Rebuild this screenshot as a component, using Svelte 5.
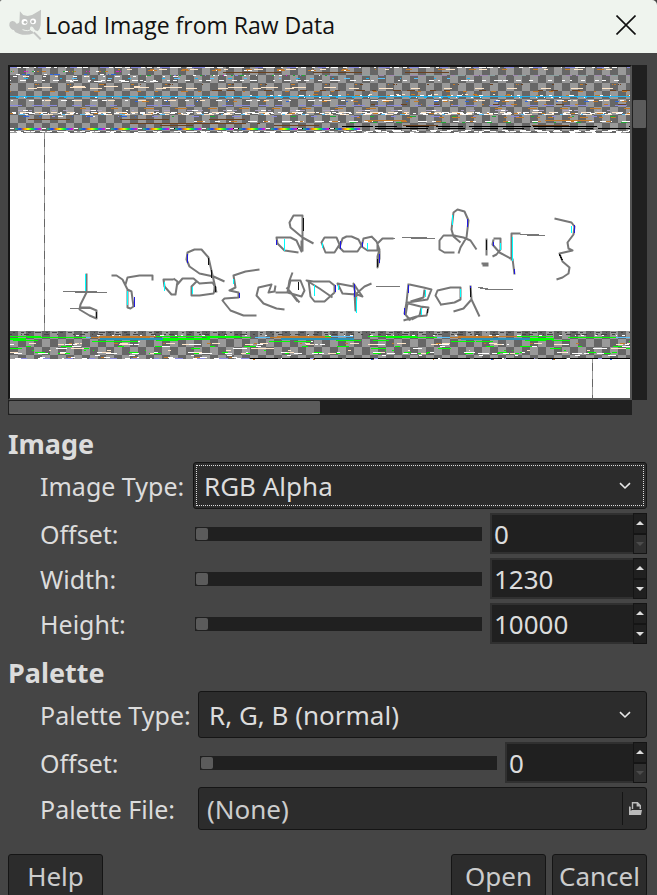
<script>
  let imageType = $state('RGB Alpha');
  let paletteType = $state('R, G, B (normal)');

  const imageFields = [
    { id: 'offset', label: 'Offset:', value: '0', atMin: true },
    { id: 'width', label: 'Width:', value: '1230', atMin: false },
    { id: 'height', label: 'Height:', value: '10000', atMin: false }
  ];
  const paletteFields = [{ id: 'palette-offset', label: 'Offset:', value: '0', atMin: true }];

  // Misaligned raw bytes show up as repeating scanline dashes.
  // [y, from, to, period, dashes per period, min length, max length, colours, thickness]
  const W = '#ffffff', K = '#000000', C = '#1fb4f0', O = '#c47a28', B = '#6b4220', T = '#ffe6c8';
  const L = '#8888dd', U = '#2f66dd', G = '#20a838', N = '#00ff00', M = '#e010d0', Y = '#5bc0f8', D = '#444444';
  const scanlines = [
    [0, 0, 620, 31, 4, 5, 12, [W, W, T, L]],
    [2, 90, 620, 32, 3, 3, 9, [O, T, U, W]],
    [3, 120, 350, 32, 3, 2, 8, [G, U, O, W]],
    [4, 0, 112, 31, 8, 2, 5, [G, M, W, O, W]],
    [5, 130, 480, 90, 1, 30, 60, [B]],
    [7, 0, 120, 28, 3, 3, 7, [W, U, W]],
    [8, 130, 320, 31, 7, 2, 5, [M, G, W, W, L]],
    [8, 320, 620, 31, 3, 5, 12, ['#8aa0a0', '#a088b0', '#88aa88']],
    [9, 0, 180, 30, 3, 3, 7, [W, W, T]],
    [11, 0, 460, 34, 2, 3, 8, [C, '#4488bb', Y]],
    [13, 0, 620, 33, 3, 3, 9, [W, T, W]],
    [14, 60, 150, 28, 2, 4, 10, [W]],
    [17, 0, 620, 32, 4, 1, 4, [B, O, B]],
    [19, 20, 130, 30, 1, 9, 16, [T]],
    [20, 0, 330, 32, 1, 12, 18, [W, T]],
    [21, 0, 620, 32, 1, 6, 14, [T, W]],
    [23, 180, 620, 36, 2, 7, 14, [O, B]],
    [24, 0, 620, 44, 2, 3, 7, [O, B]],
    [27, 300, 500, 32, 3, 2, 6, [O, T, W]],
    [28, 240, 620, 30, 3, 3, 7, [O, W, T]],
    [30, 0, 620, 8, 2, 1, 3, [W, C]],
    [33, 0, 620, 31, 3, 4, 10, [T, W, O]],
    [34, 120, 620, 30, 2, 4, 10, [O, U]],
    [37, 340, 620, 31, 2, 3, 8, [B, O]],
    [38, 0, 620, 38, 3, 6, 14, [L, L, '#555577']],
    [41, 20, 620, 32, 1, 10, 16, [O]],
    [43, 0, 620, 34, 3, 4, 10, [W, '#aaa0c0', T]],
    [45, 0, 620, 16, 3, 5, 10, [W, W, T]],
    [46, 0, 620, 28, 4, 4, 8, [T, W, O, W]],
    [47, 0, 620, 20, 4, 5, 10, [W, T, W, Y]],
    [49, 0, 130, 32, 5, 3, 8, [U, G, W, L]],
    [49, 130, 620, 40, 2, 4, 9, [W, G, L]],
    [50, 340, 620, 32, 2, 4, 9, [O, T]],
    [52, 0, 270, 90, 1, 40, 60, [B]],
    [53, 340, 620, 90, 1, 50, 80, [O]],
    [54, 170, 620, 34, 4, 5, 10, [W, O, T, W]],
    [55, 340, 620, 45, 2, 4, 10, [G, O]],
    [56, 120, 250, 130, 1, 100, 130, [B]],
    [58, 150, 620, 130, 1, 40, 70, [B]],
    [59, 320, 620, 32, 1, 29, 32, [K]],
    [61, 160, 620, 32, 1, 29, 32, [K]],
    [63, 340, 620, 18, 2, 4, 10, [W, T]],
    [64, 0, 620, 16, 2, 4, 8, [W, W]],
    [65, 0, 620, 23, 1, 3, 7, [W]],
    [265, 0, 620, 16, 2, 3, 6, [D]],
    [267, 0, 620, 18, 2, 3, 7, [D]],
    [268, 60, 620, 21, 4, 1, 4, [W, D, W]],
    [269, 0, 620, 180, 5, 40, 65, [O, N, Y, O, B]],
    [270, 0, 620, 180, 4, 30, 60, [O, Y, N]],
    [271, 0, 620, 180, 4, 25, 50, [Y, N, '#2a91b8'], 2],
    [273, 0, 620, 180, 3, 20, 35, [N, O, N]],
    [274, 0, 620, 180, 3, 15, 30, [N, W, N]],
    [276, 0, 620, 46, 3, 4, 9, [W, T, O]],
    [277, 0, 620, 62, 3, 5, 10, [W, W, T]],
    [279, 0, 620, 92, 3, 6, 16, [N, T, W]],
    [281, 0, 620, 180, 4, 10, 30, [N, N, T, W]],
    [283, 0, 620, 60, 3, 2, 5, [W, N, T]],
    [285, 0, 620, 92, 6, 5, 14, [W, N, T, W]],
    [286, 0, 620, 90, 6, 4, 11, [N, W, M, T, W]],
    [288, 0, 620, 93, 2, 5, 12, [N, W]],
    [290, 60, 620, 96, 2, 3, 8, [W, T]],
    [292, 30, 250, 32, 2, 6, 10, [O, W]],
    [293, 0, 620, 22, 3, 6, 11, [U, W, W, L]],
    [294, 200, 620, 60, 2, 3, 7, [O, U]]
  ].map(([y, ...rest]) => [y > 287 ? y - 2 : y, ...rest]);

  function buildPaths() {
    let seed = 4217;
    const rnd = () => (seed = (seed * 16807) % 2147483647) / 2147483647;
    const out = [];
    for (const [y, from, to, period, count, min, max, colours, thick = 1] of scanlines) {
      const byColour = {};
      for (let i = 0; i < count; i++) {
        const start = rnd() * period;
        const length = min + rnd() * (max - min);
        const colour = colours[Math.floor(rnd() * colours.length)];
        for (let x = from - period + start; x < to; x += period) {
          if (rnd() < 0.12) continue;
          const a = Math.max(from, Math.round(x + rnd() * 3));
          const b = Math.min(to, Math.round(x + length * (0.7 + rnd() * 0.5)));
          if (b > a) byColour[colour] = (byColour[colour] ?? '') + `M${a} ${y}h${b - a}v${thick}H${a}z`;
        }
      }
      for (const colour in byColour) out.push({ colour, d: byColour[colour] });
    }
    return out;
  }
  const noise = buildPaths();

  const handwriting = [
    // upper line
    'M298 252L284 250L277 243L276 237H290L296 240L301 251V240M313 243L302 237L290 227L289 222L293 215H302V251',
    'M324 237L321 242L325 252H334L339 244L336 237ZM342 238L339 247L343 251H357L361 245L358 239L351 236H346ZM372 236L363 238L361 246L367 250H379M371 236L376 241L379 249L377 256V267L379 258V250M393 238H382L377 243V250',
    'M455 235H443L439 240V249L444 252H454M458 253L460 247L466 237L468 220L464 211L457 209L453 212L451 229L453 236L460 242M453 235L463 237L470 240L476 249',
    'M486 238V255M481 263H488M482 265H488M493 238H500V249L496 254L492 256M493 239L492 244L499 252L510 258M511 260V233H520M512 258L514 274',
    'M554 218L571 222L574 226L573 234L567 242L568 248L572 250L559 253L562 261L569 267L568 273L562 277L556 279',
    // lower line
    'M86 273V292L80 304L79 309L89 315L96 318V310L89 307H79',
    'M111 275H116L122 279L127 289L131 291L133 306L130 308L127 307V289M125 284L127 277L139 275H152V280',
    'M173 279H163L164 286L171 294H175L177 281L173 278M176 285L182 278H193L199 283L212 282L215 287L213 293L199 295H191V286L196 281',
    'M224 281L213 276L199 273L189 266L186 259L187 252L194 249H201L208 257L213 279L216 292M214 286V292',
    'M259 269L245 271L233 275L235 287L229 290L238 292V297L224 298L222 300L230 310L243 315H256',
    'M275 285L274 291L268 292L271 284L258 287L256 295L263 303L276 308L284 309M275 292H287L301 296L304 290L300 280H290L287 292L289 280L292 272M287 288L297 301M286 287L299 302',
    'M308 280L310 296L314 301H324L334 292V285L329 281H313L306 280L319 288L332 297M353 286L337 283L342 293L355 294L353 283L357 289L362 296L354 293L355 310L356 293L364 286L371 283',
    'M408 283L406 302L404 313L410 320M409 284L423 287L431 289L427 299L407 302M424 289L423 297L410 301M408 303L420 306L428 307L426 315L416 316L403 320M421 307L419 315L411 319M407 303L405 315',
    'M441 305L435 295L437 290L450 287H460V299L454 302L441 304M470 285L471 299L463 308L453 311M471 299L479 316'
  ];
  const thin = 'M390 238H394M402 237L435 238M520 234L545 235M63 291L107 292M69 308H90M375 286H399M478 287L489 289H512';
  const cyan = 'M85 273V290M127 290V304M164 281V290M192 286V293M284 250V238M314 284V295M338 284V289M356 296V312M367 242V249M452 214V224M512 236V260M500 242V249M425 289V296M421 307V314M460 288V296M571 225V232M233 278V283M322 242V247';
  const blue = 'M187 253V262M276 239V244M239 292V297M134 296V306M340 240V248M379 253V262M362 241V246M354 283V296M574 224V232M493 241V245M514 268V273M408 284V292M404 307V314M470 285V290M335 284V291M467 226V218';
  const dark = 'M208 257V264M211 269V277M303 217V230M96 311V317M298 281V289M377 258V266M486 239V249M470 287V296M559 254L562 260M427 312V308M215 285V291';
</script>

{#snippet numberRow(field, spinClass)}
  <label for={field.id}>{field.label}</label>
  <div class="number">
    <input class="slider" type="range" min="0" max="100" value="0" aria-label={field.label} />
    <div class="spin {spinClass}">
      <input id={field.id} type="text" inputmode="numeric" value={field.value} />
      <div class="steps">
        <button type="button" aria-label="Increase">
          <svg width="8" height="4" viewBox="0 0 8 4"><path d="M4 0L8 4H0z" /></svg>
        </button>
        <button type="button" aria-label="Decrease" disabled={field.atMin}>
          <svg width="8" height="4" viewBox="0 0 8 4"><path d="M0 0H8L4 4z" /></svg>
        </button>
      </div>
    </div>
  </div>
{/snippet}

{#snippet chevron()}
  <svg class="chevron" width="12" height="8" viewBox="0 0 12 8"><path d="M1 1.2L6 6L11 1.2" /></svg>
{/snippet}

<div class="dialog">
  <header>
    <svg class="logo" width="33" height="32" viewBox="26 24 100 96" aria-hidden="true">
      <path fill="#c3c5c3" d="M59 30L69 42Q82 47 96 42L123 26L122 72Q120 84 113 91L105 88L98 78Q92 74 90 80Q88 88 98 92L101 97Q78 105 58 99Q42 94 41 87Q31 86 27 74Q26 61 36 60Q44 59 49 68Q59 69 58 54Z" />
      <path fill="none" stroke="#c3c5c3" stroke-width="6" d="M101 94L122 115" />
      <path fill="none" stroke="#eff4ee" stroke-width="3" d="M67 86Q84 93 94 84M93 79L105 92L113 94" />
      <circle cx="73" cy="63" r="9" fill="#fff" /><circle cx="99" cy="61" r="9" fill="#fff" />
      <circle cx="75" cy="64" r="4.500" fill="#b8bab8" /><circle cx="98" cy="62" r="4.500" fill="#b8bab8" />
    </svg>
    <h1>Load Image from Raw Data</h1>
    <button class="close" type="button" aria-label="Close">
      <svg width="20" height="20" viewBox="0 0 20 20"><path d="M0.500 0.500L19.500 19.500M19.500 0.500L0.500 19.500" /></svg>
    </button>
  </header>

  <main>
    <div class="preview">
      <div class="canvas">
        <svg width="100%" height="331" viewBox="0 0 620 331" preserveAspectRatio="none" shape-rendering="crispEdges" role="img" aria-label="Preview">
          <defs>
            <pattern id="checks" width="16" height="16" patternUnits="userSpaceOnUse">
              <rect width="16" height="16" fill="#666" />
              <path d="M0 0h8v8H0zM8 8h8v8H8z" fill="#999" />
            </pattern>
            <pattern id="bars" width="16" height="16" patternUnits="userSpaceOnUse">
              <rect width="16" height="8" fill="#999" /><rect y="8" width="16" height="8" fill="#666" />
            </pattern>
            <linearGradient id="spectrum">
              <stop offset="0" stop-color="#30c060" /><stop offset="0.200" stop-color="#1040ff" />
              <stop offset="0.350" stop-color="#ff8000" /><stop offset="0.500" stop-color="#f0ff00" />
              <stop offset="0.650" stop-color="#00ff30" /><stop offset="0.800" stop-color="#2060ff" />
              <stop offset="1" stop-color="#ff00c0" />
            </linearGradient>
            <pattern id="rainbow" x="5" y="61" width="32" height="2" patternUnits="userSpaceOnUse">
              <rect width="26" height="2" fill="url(#spectrum)" /><rect x="27" width="4" height="1" fill="#fff" />
            </pattern>
          </defs>
          <rect width="620" height="331" fill="#fff" />
          <rect width="620" height="66" fill="url(#checks)" />
          <rect y="264" width="620" height="28" fill="url(#checks)" />
          <rect y="29" width="620" height="1" fill={C} />
          {#each noise as run}
            <path d={run.d} fill={run.colour} />
          {/each}
          <rect y="61" width="350" height="2" fill="url(#rainbow)" />
          <path d="M240 291.500H620" stroke="#000" stroke-dasharray="28 4" />
          <rect x="34" y="66" width="1" height="198" fill="url(#bars)" />
          <rect x="582" y="292" width="1" height="39" fill="url(#bars)" />
          <g transform="translate(-9.500 -66.500)" fill="none">
            {#each handwriting as d}
              <path {d} stroke="#777" stroke-width="2" stroke-linejoin="round" shape-rendering="auto" />
            {/each}
            <path d={thin} stroke="#777" stroke-width="1.500" />
            <path d={cyan} stroke="#0ff" stroke-width="1.500" />
            <path d={blue} stroke="#2018e0" />
            <path d={dark} stroke="#111" />
          </g>
        </svg>
      </div>
      <div class="vscroll"><div></div></div>
      <div class="hscroll"><div></div></div>
    </div>

    <h2>Image</h2>
    <section class="image">
      <label for="image-type">Image Type:</label>
      <div class="select focused">
        <select id="image-type" bind:value={imageType}>
          <option>RGB</option>
          <option>RGB Alpha</option>
          <option>Indexed</option>
        </select>
        {@render chevron()}
      </div>
      {#each imageFields as field}
        {@render numberRow(field, 'wide')}
      {/each}
    </section>

    <h2>Palette</h2>
    <section class="palette">
      <label for="palette-type">Palette Type:</label>
      <div class="select">
        <select id="palette-type" bind:value={paletteType}>
          <option>R, G, B (normal)</option>
          <option>B, G, R, X (BMP style)</option>
        </select>
        {@render chevron()}
      </div>
      {#each paletteFields as field}
        {@render numberRow(field, 'narrow')}
      {/each}
      <label for="palette-file">Palette File:</label>
      <button id="palette-file" class="file" type="button">
        <span>(None)</span>
        <span class="open-icon">
          <svg width="13" height="13" viewBox="0 0 13 13">
            <path d="M3.500 7V0.700H8.500L11.300 3.500V7M8.300 0.700V3.700H11.300M0.700 4.500V12" fill="none" stroke="#bbb" stroke-width="1.400" />
            <path d="M0 5H1.500V9L3 8H13L12 13H0z" fill="#bbb" />
          </svg>
        </span>
      </button>
    </section>

    <footer>
      <button type="button">Help</button>
      <span></span>
      <button type="button">Open</button>
      <button type="button">Cancel</button>
    </footer>
  </main>
</div>

<style>
  :global(body) { margin: 0; background: #454545; }
  .dialog {
    box-sizing: border-box;
    height: 100vh;
    overflow: hidden;
    background: #454545;
    color: #dcdcdc;
    font: 26px/32px "Noto Sans", sans-serif;
  }
  .dialog * { box-sizing: border-box; }
  button, input, select { font: inherit; color: inherit; margin: 0; padding: 0; }
  button { cursor: pointer; }

  header {
    display: flex;
    align-items: center;
    height: 53px;
    padding: 0 20px 4px 9px;
    background: #eff4ee;
    color: #111;
    border-radius: 2px 5px 0 0;
  }
  .logo { flex: none; }
  h1 {
    flex: 1;
    margin: 0 0 0 3px;
    font: 400 23px/32px "Open Sans", sans-serif;
    white-space: nowrap;
  }
  .close { display: grid; place-items: center; width: 22px; height: 32px; border: 0; background: none; }
  .close path { fill: none; stroke: #111; stroke-width: 1.6; }

  main { padding: 12px 10px 0 8px; }
  .preview {
    display: grid;
    grid-template-columns: 1fr 15px;
    grid-template-rows: 335px 15px;
  }
  .canvas { border: 2px solid; border-color: #151515 #555 #555 #151515; overflow: hidden; }
  .canvas svg { display: block; }
  .vscroll, .hscroll { background: #202020; padding: 1px; }
  .vscroll { padding-top: 35px; }
  .vscroll div { height: 28px; background: #5b5b5b; border-radius: 1px; }
  .hscroll div { width: 50%; height: 13px; background: #5b5b5b; border-radius: 1px; }

  h2 { margin: 0; font-size: 27px; line-height: 32px; font-weight: 700; }
  .preview + h2 { margin-top: 13px; }
  section { display: grid; align-items: center; row-gap: 4px; padding-left: 32px; }
  .image { grid-template-columns: 153px 1fr; margin: 2px 0 13px; }
  .palette { grid-template-columns: 158px 1fr; margin-top: 2px; }
  label { font-size: 25px; white-space: nowrap; }

  .select { display: flex; align-items: center; height: 47px; position: relative; }
  select {
    appearance: none;
    width: 100%;
    height: 100%;
    padding: 0 40px 0 10px;
    background: #2c2c2c;
    border: 1px solid #151515;
    border-radius: 3px;
    outline: 0;
  }
  .focused select { outline: 1px dotted #ddd; outline-offset: -4px; }
  .chevron { position: absolute; right: 16px; pointer-events: none; }
  .chevron path { fill: none; stroke: #e8e8e8; stroke-width: 1.6; }

  .number { display: flex; align-items: center; gap: 8px; padding-left: 2px; height: 41px; }
  .slider {
    appearance: none;
    flex: 1;
    min-width: 0;
    height: 14px;
    padding: 1px;
    background: #202020;
    outline: 0;
  }
  .slider::-webkit-slider-thumb {
    appearance: none;
    width: 12px;
    height: 12px;
    background: #5b5b5b;
    border-radius: 2px;
  }
  .spin { display: flex; height: 41px; }
  .wide { width: 157px; }
  .narrow { width: 142px; }
  .spin input {
    flex: 1;
    min-width: 0;
    padding: 0 2px;
    background: #202020;
    border: 2px solid #303030;
    border-right: 0;
    outline: 0;
  }
  .steps { display: flex; flex-direction: column; width: 14px; }
  .steps button {
    display: grid;
    place-items: center;
    flex: 1;
    background: #202020;
    border: 1px solid #151515;
  }
  .steps path { fill: #ddd; }
  .steps button:disabled { background: #303030; }
  .steps button:disabled path { fill: #4c4c4c; }

  .file, footer button {
    background: #2c2c2c;
    border: 1px solid #151515;
    border-radius: 3px;
    color: #ccc;
  }
  .file { display: flex; align-items: center; justify-content: space-between; height: 43px; padding: 0 4px 0 8px; }
  .open-icon { display: grid; place-items: center end; width: 20px; height: 33px; border-left: 1px solid #151515; }

  footer { display: flex; gap: 6px; margin-top: 24px; }
  footer span { flex: 1; }
  footer button { width: 95px; height: 43px; }
</style>
